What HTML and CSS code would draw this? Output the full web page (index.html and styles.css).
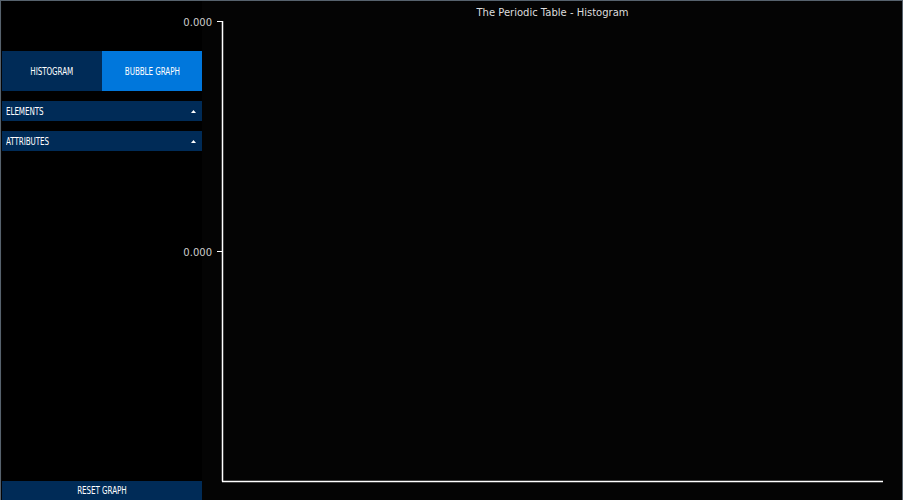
FILE: index.html
```html
<!DOCTYPE html>
<html>
<head>
<meta charset="utf-8">
<link rel="stylesheet" href="styles.css">
</head>
<body>
<div class="frame">
  <aside class="sidebar">
    <div class="modes">
      <button class="mode"><span class="lbl">HISTOGRAM</span></button>
      <button class="mode active"><span class="lbl">BUBBLE GRAPH</span></button>
    </div>
    <div class="panel">
      <span class="lbl left">ELEMENTS</span>
      <svg class="caret" width="5" height="3" viewBox="0 0 5 3"><path d="M2.5 0 L5 3 L0 3 Z" fill="#fff"/></svg>
    </div>
    <div class="panel">
      <span class="lbl left">ATTRIBUTES</span>
      <svg class="caret" width="5" height="3" viewBox="0 0 5 3"><path d="M2.5 0 L5 3 L0 3 Z" fill="#fff"/></svg>
    </div>
    <button class="reset"><span class="lbl">RESET GRAPH</span></button>
  </aside>
  <main class="chart">
    <svg class="plot" width="700" height="499" viewBox="0 0 700 499">
      <text class="title" x="350.5" y="15" text-anchor="middle">The Periodic Table - Histogram</text>
      <line x1="20.5" y1="20" x2="20.5" y2="480.5" stroke="#fff" stroke-width="1.5"/>
      <line x1="15" y1="20.5" x2="21" y2="20.5" stroke="#fff" stroke-width="1"/>
      <line x1="15" y1="250.5" x2="21" y2="250.5" stroke="#fff" stroke-width="1"/>
      <line x1="20" y1="480.5" x2="681" y2="480.5" stroke="#fff" stroke-width="1.5"/>
      <text class="tick" x="10" y="25" text-anchor="end">0.000</text>
      <text class="tick" x="10" y="255" text-anchor="end">0.000</text>
    </svg>
  </main>
</div>
</body>
</html>
```

FILE: styles.css
```css
html, body {
  margin: 0;
  padding: 0;
  background: #000;
}
.frame {
  box-sizing: border-box;
  width: 903px;
  height: 500px;
  border-top: 1px solid #56626d;
  border-left: 1px solid #56626d;
  border-right: 1px solid #56626d;
  display: flex;
  overflow: hidden;
  background: #040404;
}
.sidebar {
  width: 200px;
  margin-left: 1px;
  display: flex;
  flex-direction: column;
  background: #000;
  font-family: "DejaVu Sans Condensed", "Liberation Sans Narrow", sans-serif;
  font-size: 10px;
  color: #fff;
  position: relative;
  z-index: 0;
}
.lbl {
  display: inline-block;
  transform: scaleX(0.8);
  letter-spacing: -0.1px;
}
.lbl.left {
  transform-origin: left center;
}
.modes {
  margin-top: 50px;
  display: flex;
  height: 40px;
}
.mode {
  flex: 1;
  border: 0;
  margin: 0;
  padding: 0;
  background: #002b57;
  color: #fff;
  font: inherit;
}
.mode.active {
  background: #0077dc;
}
.panel {
  margin-top: 10px;
  height: 20px;
  background: #002b57;
  display: flex;
  align-items: center;
  justify-content: space-between;
  padding: 0 6px 0 4px;
}
.caret {
  display: block;
}
.reset {
  margin-top: auto;
  height: 19px;
  border: 0;
  padding: 0;
  background: #002b57;
  color: #fff;
  font: inherit;
}
.chart {
  flex: 1;
  position: relative;
  z-index: 1;
}
.plot {
  display: block;
  overflow: visible;
}
.title {
  font-family: "DejaVu Sans", sans-serif;
  font-size: 10px;
  fill: #dddddd;
}
.tick {
  font-family: "DejaVu Sans", sans-serif;
  font-size: 10px;
  fill: #cccccc;
}
```
